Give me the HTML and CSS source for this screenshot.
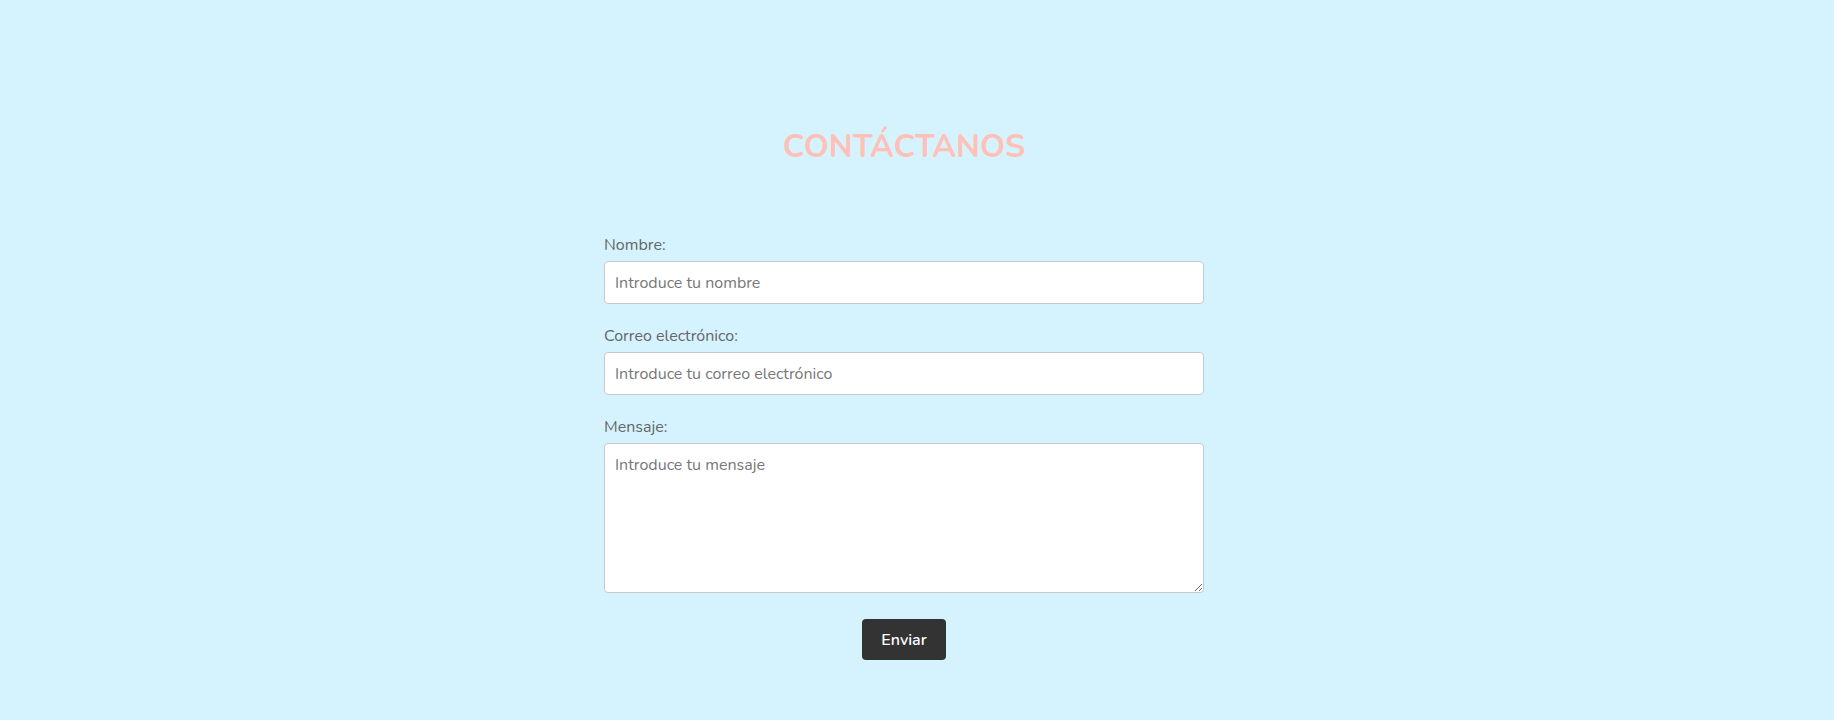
FILE: index.html
```html
<!DOCTYPE html>
<html lang="es">
<head>
<meta charset="utf-8">
<title>Contáctanos</title>
<link rel="stylesheet" href="styles.css">
</head>
<body>
<main class="page">
  <h1 class="title">CONTÁCTANOS</h1>
  <form class="contact-form">
    <label class="field-label" for="nombre">Nombre:</label>
    <input class="field-input" type="text" id="nombre" placeholder="Introduce tu nombre">
    <label class="field-label" for="correo">Correo electrónico:</label>
    <input class="field-input" type="email" id="correo" placeholder="Introduce tu correo electrónico">
    <label class="field-label" for="mensaje">Mensaje:</label>
    <textarea class="field-input field-textarea" id="mensaje" placeholder="Introduce tu mensaje"></textarea>
    <div class="actions">
      <button class="submit-btn" type="button">Enviar</button>
    </div>
  </form>
</main>
</body>
</html>
```
FILE: styles.css
```css
html, body {
  margin: 0;
  padding: 0;
  background: #d5f3fe;
  height: 100%;
}
body {
  font-family: "Nunito", "Lato", "Open Sans", sans-serif;
}
.page {
  display: flex;
  flex-direction: column;
  align-items: center;
  padding: 127px 26px 0 0;
}
.title {
  margin: 0;
  font-size: 32px;
  line-height: 40px;
  font-weight: 700;
  color: #ffc1b7;
}
.contact-form {
  width: 600px;
  margin-top: 67px;
  display: flex;
  flex-direction: column;
}
.field-label {
  display: block;
  font-size: 16px;
  line-height: 22px;
  color: #666;
  margin-bottom: 5px;
}
.field-input {
  box-sizing: border-box;
  width: 100%;
  height: 43px;
  padding: 10px 10px;
  border: 1px solid #c8c8c8;
  border-radius: 4px;
  background: #fff;
  font-family: inherit;
  font-size: 16px;
  color: #333;
  margin: 0 0 21px 0;
  outline: none;
}
.field-input::placeholder {
  color: #777;
}
.field-textarea {
  height: 150px;
  margin-bottom: 26px;
  resize: vertical;
  display: block;
}
.actions {
  display: flex;
  justify-content: center;
}
.submit-btn {
  width: 84px;
  height: 41px;
  border: none;
  border-radius: 4px;
  background: #333;
  color: #fff;
  font-family: inherit;
  font-size: 16px;
  font-weight: 600;
  cursor: pointer;
}
```
